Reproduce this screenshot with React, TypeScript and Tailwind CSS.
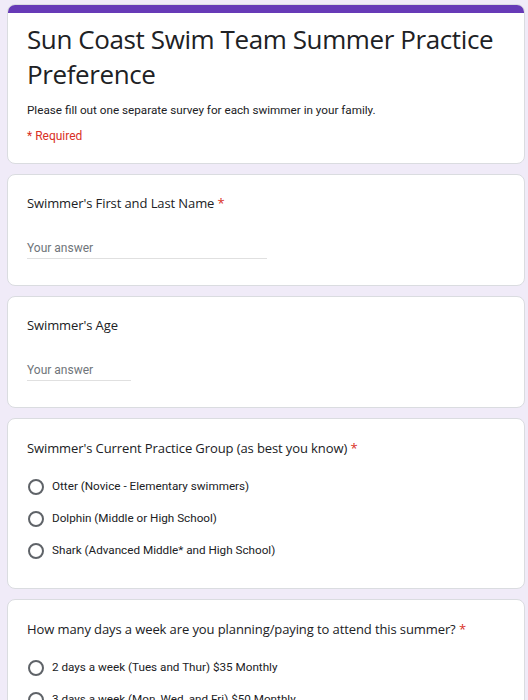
import React from 'react';

const options1 = [
  'Otter (Novice - Elementary swimmers)',
  'Dolphin (Middle or High School)',
  'Shark (Advanced Middle* and High School)',
];

const options2 = [
  '2 days a week (Tues and Thur) $35 Monthly',
  '3 days a week (Mon, Wed, and Fri) $50 Monthly',
  '5 days a week (Mon - Fri) $75 Monthly',
];

function Card({ children, className = '' }: { children: React.ReactNode; className?: string }) {
  return (
    <div className={`bg-white rounded-lg border border-[#dadce0] ${className}`}>{children}</div>
  );
}

function QuestionTitle({ text, required }: { text: string; required?: boolean }) {
  return (
    <div className="text-[13px] leading-5 text-[#202124] font-['Open_Sans',sans-serif] tracking-[-0.1px]">
      {text}
      {required && <span className="text-[#d93025]"> *</span>}
    </div>
  );
}

function TextQuestion({ title, required, lineWidth }: { title: string; required?: boolean; lineWidth: string }) {
  return (
    <Card className="pt-[18px] pb-[26px] px-[19px]">
      <QuestionTitle text={title} required={required} />
      <div className={`mt-[27px] ${lineWidth} border-b border-[#e0e0e0] pb-[2px] text-[12px] leading-4 text-[#70757a]`}>
        Your answer
      </div>
    </Card>
  );
}

function RadioQuestion({ title, options }: { title: string; options: string[] }) {
  return (
    <Card className="pt-[19px] pb-[21px] px-[19px]">
      <QuestionTitle text={title} required />
      <div className="mt-[13px] flex flex-col">
        {options.map((o) => (
          <label key={o} className="flex items-center h-8">
            <span className="ml-[1px] w-[16px] h-[16px] rounded-full border-2 border-[#5f6368] shrink-0" />
            <span className="ml-[8px] text-[11.7px] text-[#202124]">{o}</span>
          </label>
        ))}
      </div>
    </Card>
  );
}

export default function App() {
  return (
    <div className="min-h-screen bg-[#f0ebf8] font-['Roboto',sans-serif] pt-[4px] pl-[7px] pr-[3px] pb-6">
      <div className="flex flex-col gap-[10px]">
        <div className="bg-white rounded-lg border border-[#dadce0] overflow-hidden">
          <div className="h-[8px] bg-[#673ab7]" />
          <div className="px-[19px] pt-[9px] pb-[19px]">
            <h1 className="text-[26px] leading-[35px] text-[#202124] font-['Open_Sans',sans-serif] tracking-[-0.4px]">
              Sun Coast Swim Team Summer Practice Preference
            </h1>
            <p className="mt-[10px] text-[11.7px] leading-4 text-[#202124]">
              Please fill out one separate survey for each swimmer in your family.
            </p>
            <p className="mt-[10px] text-[12px] leading-4 text-[#d93025]">* Required</p>
          </div>
        </div>
        <TextQuestion title="Swimmer's First and Last Name" required lineWidth="w-[240px]" />
        <TextQuestion title="Swimmer's Age" lineWidth="w-[104px]" />
        <RadioQuestion title="Swimmer's Current Practice Group (as best you know)" options={options1} />
        <RadioQuestion title="How many days a week are you planning/paying to attend this summer?" options={options2} />
      </div>
    </div>
  );
}
